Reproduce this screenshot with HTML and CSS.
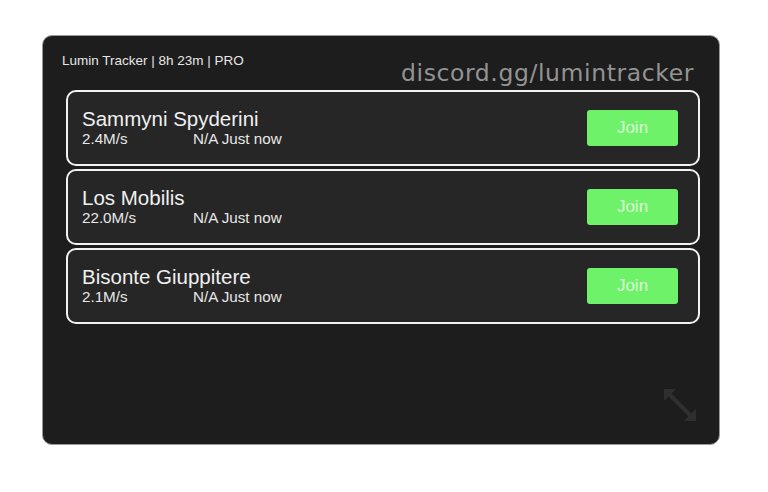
FILE: index.html
```html
<!DOCTYPE html>
<html lang="en">
<head>
    <meta charset="UTF-8" />
    <title>Lumin Tracker</title>
    <link rel="stylesheet" href="styles.css">
</head>
<body>
    <div class="panel">
        <div class="header">
            <span class="status">Lumin Tracker | 8h 23m | PRO</span>
            <span class="invite">discord.gg/lumintracker</span>
        </div>

        <div class="list">
            <div class="card">
                <div class="info">
                    <div class="name">Sammyni Spyderini</div>
                    <div class="meta"><span class="rate">2.4M/s</span><span>N/A Just now</span></div>
                </div>
                <button class="join">Join</button>
            </div>
            <div class="card">
                <div class="info">
                    <div class="name">Los Mobilis</div>
                    <div class="meta"><span class="rate">22.0M/s</span><span>N/A Just now</span></div>
                </div>
                <button class="join">Join</button>
            </div>
            <div class="card">
                <div class="info">
                    <div class="name">Bisonte Giuppitere</div>
                    <div class="meta"><span class="rate">2.1M/s</span><span>N/A Just now</span></div>
                </div>
                <button class="join">Join</button>
            </div>
        </div>

        <!-- resize handle -->
        <svg class="resize" width="38" height="38" viewBox="0 0 38 38">
            <path d="M6 6 L32 32" stroke="#2f2f2f" stroke-width="4" fill="none" />
            <path d="M3 3 H15 L3 15 Z" fill="#2f2f2f" />
            <path d="M35 35 H23 L35 23 Z" fill="#2f2f2f" />
        </svg>
    </div>
</body>
</html>
```

FILE: styles.css
```css
* {
    margin: 0;
    padding: 0;
    box-sizing: border-box;
}
body {
    background: #ffffff;
    font-family: 'Liberation Sans', Arial, sans-serif;
}
.panel {
    position: relative;
    width: 678px;
    height: 410px;
    margin: 35px 0 0 42px;
    background: #1d1d1d;
    border: 1px solid #9a9a9a;
    border-radius: 10px;
    padding: 0 19px 0 23px;
}
.header {
    display: flex;
    justify-content: space-between;
    align-items: flex-start;
    height: 54px;
    padding-top: 17px;
}
.status {
    color: #e6e6e6;
    font-size: 13.5px;
    margin-left: -4px;
}
.invite {
    color: #939393;
    font-family: 'DejaVu Sans', sans-serif;
    font-size: 23.5px;
    letter-spacing: 0.6px;
    line-height: 28px;
    margin-top: 6px;
    margin-right: 6px;
}
.list {
    display: flex;
    flex-direction: column;
    gap: 3px;
}
.card {
    display: flex;
    align-items: center;
    justify-content: space-between;
    height: 76px;
    background: #262626;
    border: 2px solid #f2f2f2;
    border-radius: 10px;
    padding: 0 20px 0 14px;
}
.info {
    margin-top: -2px;
}
.name {
    color: #f0f0f0;
    font-size: 20.5px;
    line-height: 22px;
}
.meta {
    display: flex;
    color: #e8e8e8;
    font-size: 15.2px;
    line-height: 17px;
}
.rate {
    width: 111px;
}
.join {
    width: 91px;
    height: 36px;
    background: #6ef26a;
    color: #dcfcd6;
    border: none;
    border-radius: 3px;
    font-family: 'Liberation Sans', Arial, sans-serif;
    font-size: 17px;
}
.resize {
    position: absolute;
    right: 20px;
    bottom: 20px;
}
```
